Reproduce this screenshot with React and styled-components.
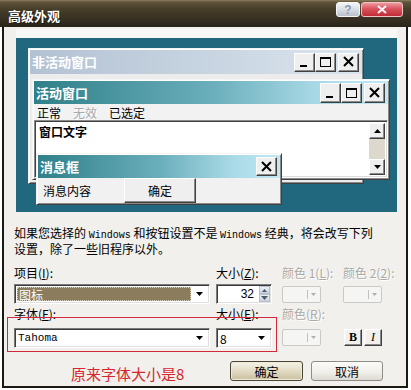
import React from 'react';
import styled, { createGlobalStyle } from 'styled-components';

const CJK = `"Noto Sans CJK SC", "Noto Sans", sans-serif`;
const MONO = `"Liberation Mono", "DejaVu Sans Mono", monospace`;
const SERIF = `"Liberation Serif", "DejaVu Serif", serif`;

const Global = createGlobalStyle`
  html, body { margin: 0; padding: 0; background: #ffffff; }
  body { font-family: ${CJK}; font-size: 12px; color: #000; }
  * { box-sizing: border-box; }
`;

const Dialog = styled.div`
  width: 411px;
  height: 390px;
  display: flex;
  flex-direction: column;
  overflow: hidden;
  background: #ffffff;
`;

const TitleBar = styled.div`
  height: 27px;
  flex: none;
  display: flex;
  align-items: flex-start;
  padding: 0 8px 0 8px;
  background: linear-gradient(#8d8060 0, #5f543a 2px, #463d29 35%, #383022 70%, #29231a 100%);
`;

const TitleText = styled.div`
  margin-top: 9px;
  font-size: 13px;
  line-height: 13px;
  font-weight: 700;
  color: #ffffff;
  text-shadow: 1px 1px 0 #1d1a12;
`;

const TitleButtons = styled.div`
  margin-left: auto;
  margin-top: 2px;
  display: flex;
  gap: 1px;
`;

const HelpButton = styled.div`
  width: 24px;
  height: 15px;
  border: 1px solid #f6f6f6;
  border-radius: 3px;
  background: linear-gradient(#f3f5f8, #d6dbe3 55%, #b9c0cc);
  display: flex;
  align-items: center;
  justify-content: center;
  font-family: "Liberation Sans", sans-serif;
  font-weight: 700;
  font-size: 12px;
  line-height: 12px;
  color: #8a93a6;
  text-shadow: 0 0 1px #ffffff;
`;

const CloseButton = styled.div`
  width: 42px;
  height: 15px;
  border: 1px solid #f1c4c4;
  border-radius: 3px;
  background: linear-gradient(#ee9aa0, #d9535c 45%, #c12a36);
  display: flex;
  align-items: center;
  justify-content: center;
`;

const Frame = styled.div`
  position: relative;
  flex: 1;
  margin: 0 3px 2px 2px;
  border: 2px solid #1c1912;
  border-top: 0;
  background: #f1f0ec;
  display: flex;
  flex-direction: column;
`;

const PreviewWell = styled.div`
  margin: 2px 0 0 12px;
  width: 381px;
  padding-top: 9px;
  background: #f8f8f6;
`;

const Desktop = styled.div`
  position: relative;
  height: 174px;
  background: #21687e;
`;

const Win = styled.div`
  position: absolute;
  left: ${p => p.$x}px;
  top: ${p => p.$y}px;
  width: ${p => p.$w}px;
  height: ${p => (p.$h ? `${p.$h}px` : 'auto')};
  padding: 1px;
  background: #ececec;
  border: 1px solid;
  border-color: #f4f4f4 #404040 #404040 #f4f4f4;
  box-shadow: inset 1px 1px #ffffff, inset -1px -1px #8a8a8a;
  display: flex;
  flex-direction: column;
`;

const Caption = styled.div`
  height: ${p => p.$h}px;
  flex: none;
  display: flex;
  align-items: center;
  padding: 0 3px 0 2px;
  background: ${p =>
    p.$inactive
      ? 'linear-gradient(90deg, #b3c2d3, #c6d3e0 50%, #dbe5ee)'
      : 'linear-gradient(90deg, #2f8088, #6aaebb 50%, #a9d9e6 80%, #c2e9f4)'};
`;

const CaptionTitle = styled.span`
  font-size: 13px;
  font-weight: 700;
  color: #ffffff;
  line-height: 14px;
`;

const CaptionButtons = styled.div`
  margin-left: auto;
  display: flex;
  align-items: center;
`;

const CapBtn = styled.div`
  width: 21px;
  height: ${p => p.$h}px;
  margin-left: ${p => (p.$sep ? 2 : 0)}px;
  background: #efefef;
  border: 1px solid;
  border-color: #ffffff #404040 #404040 #ffffff;
  box-shadow: inset -1px -1px #8a8a8a;
  display: flex;
  align-items: center;
  justify-content: center;
`;

const MenuBar = styled.div`
  height: 16px;
  flex: none;
  display: flex;
  align-items: center;
  gap: 12px;
  padding-left: 3px;
  background: #f2f2f2;
  font-size: 12px;
`;

const MenuItem = styled.span`
  color: ${p => (p.$disabled ? '#a9a9a9' : '#000')};
  text-shadow: ${p => (p.$disabled ? '1px 1px 0 #ffffff' : 'none')};
`;

const TextPane = styled.div`
  height: 58px;
  flex: none;
  display: flex;
  background: #ffffff;
  border: 1px solid;
  border-color: #8a8a8a #ffffff #ffffff #8a8a8a;
  box-shadow: inset 1px 1px #404040, inset -1px -1px #dcdcdc;
  padding: 2px;
`;

const PaneText = styled.div`
  flex: 1;
  padding: 2px 0 0 2px;
  font-weight: 700;
  font-size: 12px;
  line-height: 14px;
`;

const ScrollBar = styled.div`
  width: 16px;
  display: flex;
  flex-direction: column;
`;

const ScrollBtn = styled.div`
  height: 16px;
  flex: none;
  background: #efefef;
  border: 1px solid;
  border-color: #ffffff #404040 #404040 #ffffff;
  box-shadow: inset -1px -1px #8a8a8a;
  display: flex;
  align-items: center;
  justify-content: center;
`;

const ScrollTrack = styled.div`
  flex: 1;
  background: #dcd8ce;
`;

const MsgBody = styled.div`
  height: 25px;
  display: flex;
  align-items: center;
  background: #f1f1f1;
`;

const MsgText = styled.span`
  margin-left: 5px;
  font-size: 12px;
  width: 48px;
`;

const MsgButton = styled.div`
  margin-left: 33px;
  width: 72px;
  height: 25px;
  background: #efefef;
  border: 1px solid;
  border-color: #ffffff #404040 #404040 #ffffff;
  box-shadow: inset -1px -1px #8a8a8a;
  display: flex;
  align-items: center;
  justify-content: center;
  font-size: 12px;
`;

const Description = styled.div`
  margin: 14px 0 0 10px;
  font-size: 12px;
  line-height: 13px;
  white-space: nowrap;
`;

const Latin = styled.span`
  font-family: ${MONO};
  font-size: 10px;
`;

const FormGrid = styled.div`
  margin: 11px 0 0 10px;
  display: grid;
  grid-template-columns: 202px 66px 61px 40px;
  grid-template-rows: 14px 24px 17px 27px;
  align-items: end;
`;

const Label = styled.div`
  font-size: 12px;
  line-height: 14px;
  white-space: nowrap;
  color: ${p => (p.$disabled ? '#aaa9a4' : '#000')};
  text-shadow: ${p => (p.$disabled ? '1px 1px 0 #ffffff' : 'none')};
`;

const Key = styled.span`
  text-decoration: underline;
`;

const Combo = styled.div`
  width: ${p => p.$w}px;
  height: 20px;
  display: flex;
  align-items: stretch;
  background: #ffffff;
  border: 1px solid;
  border-color: #7a7a7a #ffffff #ffffff #7a7a7a;
  box-shadow: inset 1px 1px #3c3c3c, inset -1px -1px #e0e0e0;
  padding: 2px;
`;

const ComboValue = styled.div`
  flex: 1;
  display: flex;
  align-items: center;
  padding-left: ${p => (p.$selected ? 2 : 1)}px;
  background: ${p => (p.$selected ? '#8a7c5c' : 'transparent')};
  color: ${p => (p.$selected ? '#ffffff' : '#000')};
  outline: ${p => (p.$selected ? '1px dotted #d8d2c0' : 'none')};
  outline-offset: -1px;
  font-family: ${p => (p.$mono ? MONO : CJK)};
  font-size: ${p => (p.$mono ? '11px' : '12px')};
`;

const ComboArrow = styled.div`
  width: 16px;
  display: flex;
  align-items: center;
  justify-content: center;
`;

const SpinBox = styled(Combo)`
  padding: 1px 1px 1px 2px;
`;

const SpinValue = styled.div`
  flex: 1;
  display: flex;
  align-items: center;
  justify-content: flex-end;
  padding-right: 5px;
  font-family: "Liberation Sans", sans-serif;
  font-size: 12px;
`;

const SpinButtons = styled.div`
  width: 11px;
  display: flex;
  flex-direction: column;
  gap: 0;
`;

const SpinPart = styled.div`
  flex: 1;
  background: linear-gradient(#eef1f5, #c9d1dc);
  border: 1px solid #b7c0cc;
  display: flex;
  align-items: center;
  justify-content: center;
`;

const ColorButton = styled.div`
  width: 39px;
  height: 17px;
  margin-bottom: ${p => p.$mb || 0}px;
  border: 1px solid #c9c9c6;
  border-radius: 2px;
  background: #f5f5f3;
  display: flex;
  align-items: center;
  justify-content: flex-end;
  padding-right: 4px;
  gap: 3px;
`;

const ColorDivider = styled.div`
  width: 1px;
  height: 9px;
  background: #c2c2c2;
`;

const StyleButtons = styled.div`
  display: flex;
  gap: 2px;
  margin: 0 0 2px 1px;
`;

const StyleButton = styled.div`
  width: 18px;
  height: 17px;
  background: #f1f0ec;
  border: 1px solid;
  border-color: #ffffff #404040 #404040 #ffffff;
  box-shadow: inset -1px -1px #8a8a8a, inset 1px 1px #f4f4f4;
  display: flex;
  align-items: center;
  justify-content: center;
  font-family: ${SERIF};
  font-size: 12px;
  font-weight: ${p => (p.$bold ? 700 : 400)};
  font-style: ${p => (p.$italic ? 'italic' : 'normal')};
`;

const BottomRow = styled.div`
  margin-top: 13px;
  display: flex;
  align-items: flex-start;
  padding: 0 23px 0 67px;
`;

const Note = styled.div`
  margin-top: 4px;
  font-size: 15px;
  line-height: 18px;
  color: #d7262e;
  white-space: nowrap;
`;

const DialogButtons = styled.div`
  margin-left: auto;
  display: flex;
  gap: 8px;
`;

const PushButton = styled.div`
  width: ${p => p.$w}px;
  height: 20px;
  border-radius: 3px;
  border: 1px solid ${p => (p.$default ? '#4a4636' : '#8f8d86')};
  background: ${p =>
    p.$default
      ? 'linear-gradient(#f6f3e8, #e2dbc4 50%, #c9bf9f)'
      : 'linear-gradient(#fbfbf9, #efeee9 60%, #dcdad2)'};
  box-shadow: ${p => (p.$default ? 'inset 0 0 0 1px #efe9d6' : 'none')};
  display: flex;
  align-items: center;
  justify-content: center;
  font-size: 12px;
`;

const Annotation = styled.div`
  position: absolute;
  left: 3px;
  top: 290px;
  width: 270px;
  height: 35px;
  border: 1px solid #d2283a;
  pointer-events: none;
`;

const Glyph = ({ type }) => {
  if (type === 'min')
    return (
      <svg width="13" height="12" viewBox="0 0 13 12">
        <rect x="2" y="9" width="7" height="2" fill="#000" />
      </svg>
    );
  if (type === 'max')
    return (
      <svg width="13" height="12" viewBox="0 0 13 12">
        <rect x="1.5" y="1.5" width="10" height="9" fill="none" stroke="#000" />
        <rect x="1" y="1" width="11" height="2" fill="#000" />
      </svg>
    );
  return (
    <svg width="13" height="12" viewBox="0 0 13 12">
      <path d="M2 1l9 9M11 1l-9 9" stroke="#000" strokeWidth="2" />
    </svg>
  );
};

const DownArrow = ({ color = '#000' }) => (
  <svg width="7" height="4" viewBox="0 0 7 4">
    <path d="M0 0h7L3.5 4z" fill={color} />
  </svg>
);

const UpArrow = ({ color = '#000', w = 7, h = 4 }) => (
  <svg width={w} height={h} viewBox="0 0 7 4">
    <path d="M0 4h7L3.5 0z" fill={color} />
  </svg>
);

const CaptionButtonSet = ({ h, closeOnly }) => (
  <CaptionButtons>
    {!closeOnly && (
      <>
        <CapBtn $h={h}><Glyph type="min" /></CapBtn>
        <CapBtn $h={h}><Glyph type="max" /></CapBtn>
      </>
    )}
    <CapBtn $h={h} $sep={!closeOnly}><Glyph type="close" /></CapBtn>
  </CaptionButtons>
);

const SmallDrop = () => (
  <svg width="5" height="3" viewBox="0 0 5 3">
    <path d="M0 0h5L2.5 3z" fill="#b0b0b0" />
  </svg>
);

export default function App() {
  return (
    <>
      <Global />
      <Dialog>
        <TitleBar>
          <TitleText>高级外观</TitleText>
          <TitleButtons>
            <HelpButton>?</HelpButton>
            <CloseButton>
              <svg width="10" height="9" viewBox="0 0 10 9">
                <path d="M1 1l8 7M9 1L1 8" stroke="#fff4f4" strokeWidth="2" />
              </svg>
            </CloseButton>
          </TitleButtons>
        </TitleBar>

        <Frame>
          <PreviewWell>
            <Desktop>
              <Win $x={12} $y={10} $w={336} $h={136}>
                <Caption $h={24} $inactive>
                  <CaptionTitle>非活动窗口</CaptionTitle>
                  <CaptionButtonSet h={19} />
                </Caption>
              </Win>

              <Win $x={16} $y={41} $w={358}>
                <Caption $h={23}>
                  <CaptionTitle>活动窗口</CaptionTitle>
                  <CaptionButtonSet h={20} />
                </Caption>
                <MenuBar>
                  <MenuItem>正常</MenuItem>
                  <MenuItem $disabled>无效</MenuItem>
                  <MenuItem>已选定</MenuItem>
                </MenuBar>
                <TextPane>
                  <PaneText>窗口文字</PaneText>
                  <ScrollBar>
                    <ScrollBtn><UpArrow /></ScrollBtn>
                    <ScrollTrack />
                    <ScrollBtn><DownArrow /></ScrollBtn>
                  </ScrollBar>
                </TextPane>
              </Win>

              <Win $x={20} $y={115} $w={246}>
                <Caption $h={23}>
                  <CaptionTitle>消息框</CaptionTitle>
                  <CaptionButtonSet h={19} closeOnly />
                </Caption>
                <MsgBody>
                  <MsgText>消息内容</MsgText>
                  <MsgButton>确定</MsgButton>
                </MsgBody>
              </Win>
            </Desktop>
          </PreviewWell>

          <Description>
            如果您选择的 <Latin>Windows</Latin> 和按钮设置不是 <Latin>Windows</Latin> 经典，将会改写下列
            <br />
            设置，除了一些旧程序以外。
          </Description>

          <FormGrid>
            <Label>项目(<Key>I</Key>):</Label>
            <Label>大小(<Key>Z</Key>):</Label>
            <Label $disabled>颜色 1(<Key>L</Key>):</Label>
            <Label $disabled>颜色 2(<Key>2</Key>):</Label>

            <Combo $w={196}>
              <ComboValue $selected>图标</ComboValue>
              <ComboArrow><DownArrow /></ComboArrow>
            </Combo>
            <SpinBox $w={56}>
              <SpinValue>32</SpinValue>
              <SpinButtons>
                <SpinPart><UpArrow color="#4d5a6e" w={5} h={3} /></SpinPart>
                <SpinPart><DownArrow color="#4d5a6e" /></SpinPart>
              </SpinButtons>
            </SpinBox>
            <ColorButton $mb={1}>
              <ColorDivider />
              <SmallDrop />
            </ColorButton>
            <ColorButton $mb={1}>
              <ColorDivider />
              <SmallDrop />
            </ColorButton>

            <Label>字体(<Key>F</Key>):</Label>
            <Label>大小(<Key>E</Key>):</Label>
            <Label $disabled>颜色(<Key>R</Key>):</Label>
            <div />

            <Combo $w={196}>
              <ComboValue $mono>Tahoma</ComboValue>
              <ComboArrow><DownArrow /></ComboArrow>
            </Combo>
            <Combo $w={56}>
              <ComboValue>8</ComboValue>
              <ComboArrow><DownArrow /></ComboArrow>
            </Combo>
            <ColorButton $mb={2}>
              <ColorDivider />
              <SmallDrop />
            </ColorButton>
            <StyleButtons>
              <StyleButton $bold>B</StyleButton>
              <StyleButton $italic>I</StyleButton>
            </StyleButtons>
          </FormGrid>

          <BottomRow>
            <Note>原来字体大小是8</Note>
            <DialogButtons>
              <PushButton $w={73} $default>确定</PushButton>
              <PushButton $w={72}>取消</PushButton>
            </DialogButtons>
          </BottomRow>

          <Annotation />
        </Frame>
      </Dialog>
    </>
  );
}
